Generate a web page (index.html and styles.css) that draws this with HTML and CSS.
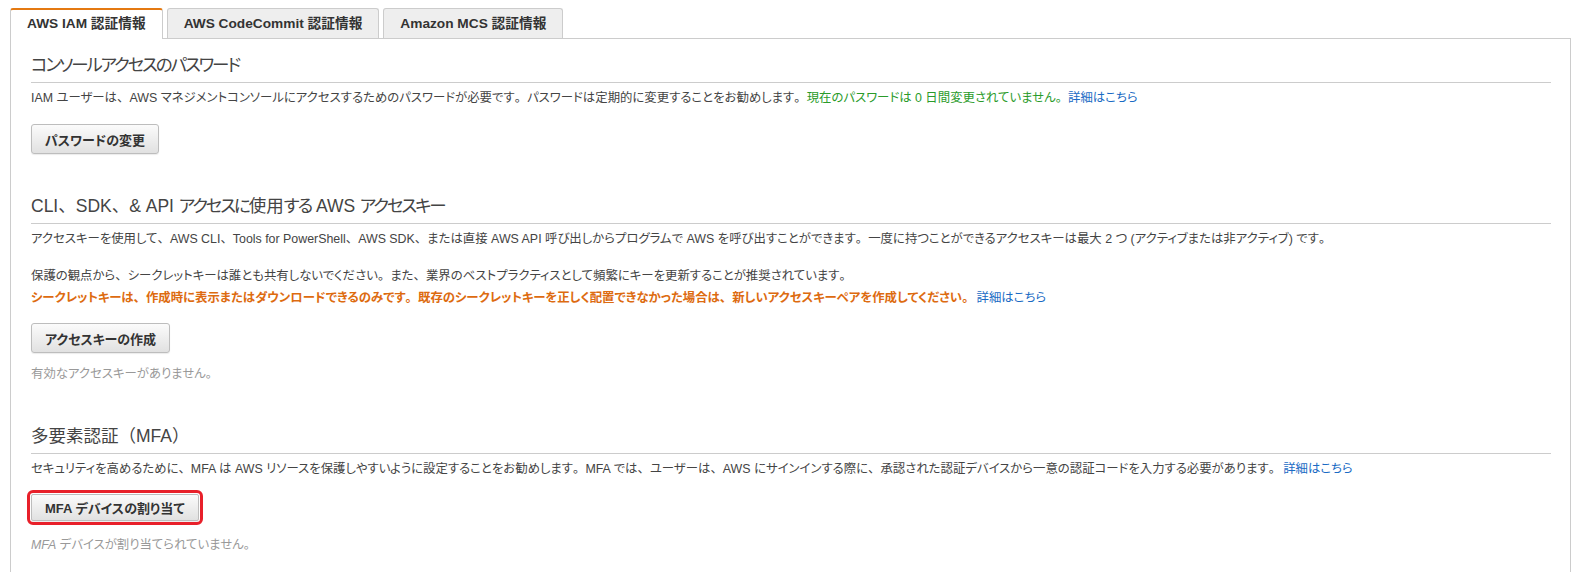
FILE: index.html
```html
<!DOCTYPE html>
<html lang="ja">
<head>
<meta charset="utf-8">
<title>AWS IAM 認証情報</title>
<link rel="stylesheet" href="styles.css">
</head>
<body>
<div class="page">
  <div class="tabs">
    <div class="tab active">AWS IAM 認証情報</div>
    <div class="tab">AWS CodeCommit 認証情報</div>
    <div class="tab">Amazon MCS 認証情報</div>
  </div>
  <div class="panel">
    <section class="section first">
      <h2 class="heading"><span class="kana">コンソールアクセスのパスワード</span></h2>
      <p class="text">IAM ユーザーは<span class="fw">、</span>AWS マネジメントコンソールにアクセスするためのパスワードが必要です<span class="fw">。</span>パスワードは定期的に変更することをお勧めします<span class="fw">。</span><span class="ok">現在のパスワードは 0 日間変更されていません<span class="fw">。</span></span><a class="link" href="#">詳細はこちら</a></p>
      <button class="btn">パスワードの変更</button>
    </section>
    <section class="section second">
      <h2 class="heading">CLI<span class="fw">、</span>SDK<span class="fw">、</span>&amp; API <span class="kana">アクセスに</span>使用<span class="kana">する</span> AWS <span class="kana">アクセスキー</span></h2>
      <p class="text">アクセスキーを使用して<span class="fw">、</span>AWS CLI<span class="fw">、</span>Tools for PowerShell<span class="fw">、</span>AWS SDK<span class="fw">、</span>または直接 AWS API 呼び出しからプログラムで AWS を呼び出すことができます<span class="fw">。</span>一度に持つことができるアクセスキーは最大 2 つ (アクティブまたは非アクティブ) です<span class="fw">。</span></p>
      <p class="text spaced">保護の観点から<span class="fw">、</span>シークレットキーは誰とも共有しないでください<span class="fw">。</span>また<span class="fw">、</span>業界のベストプラクティスとして頻繁にキーを更新することが推奨されています<span class="fw">。</span><br><span class="warn">シークレットキーは<span class="fw">、</span>作成時に表示またはダウンロードできるのみです<span class="fw">。</span>既存のシークレットキーを正しく配置できなかった場合は<span class="fw">、</span>新しいアクセスキーペアを作成してください<span class="fw">。</span></span><a class="link" href="#">詳細はこちら</a></p>
      <button class="btn">アクセスキーの作成</button>
      <p class="muted">有効なアクセスキーがありません<span class="fw">。</span></p>
    </section>
    <section class="section third">
      <h2 class="heading">多要素認証<span class="fw">（</span>MFA<span class="fw">）</span></h2>
      <p class="text">セキュリティを高めるために<span class="fw">、</span>MFA は AWS リソースを保護しやすいように設定することをお勧めします<span class="fw">。</span>MFA では<span class="fw">、</span>ユーザーは<span class="fw">、</span>AWS にサインインする際に<span class="fw">、</span>承認された認証デバイスから一意の認証コードを入力する必要があります<span class="fw">。</span><a class="link" href="#">詳細はこちら</a></p>
      <button class="btn highlight">MFA デバイスの割り当て</button>
      <p class="muted mfa-note"><i>MFA</i> デバイスが割り当てられていません<span class="fw">。</span></p>
    </section>
  </div>
</div>
</body>
</html>
```

FILE: styles.css
```css
html, body {
  margin: 0;
  padding: 0;
  background: #fff;
}

body {
  font-family: "Liberation Sans", "Noto Sans CJK JP", sans-serif;
  font-feature-settings: "palt";
  color: #444;
  font-size: 12.4px;
}

.fw {
  font-feature-settings: normal;
}

.page {
  padding: 8px 15px 0 10px;
}

.tabs {
  display: flex;
  gap: 4px;
  align-items: flex-end;
}

.tab {
  height: 29px;
  line-height: 29px;
  padding: 0 16px;
  border: 1px solid #ccc;
  border-bottom: none;
  border-radius: 3px 3px 0 0;
  background: #eee;
  font-weight: bold;
  font-size: 13.7px;
  color: #333;
  white-space: nowrap;
}

.tab.active {
  background: #fff;
  border-top: 2px solid #e47911;
  line-height: 28px;
  margin-bottom: -1px;
  position: relative;
  z-index: 1;
}

.panel {
  border: 1px solid #ccc;
  padding: 0 19px 40px 20px;
  min-height: 520px;
}

.section {
  padding-top: 40px;
}

.section.first {
  padding-top: 14px;
}

.section.third {
  padding-top: 39px;
}

.heading {
  margin: 0;
  font-size: 17.5px;
  font-weight: normal;
  line-height: 24px;
  color: #444;
  padding-bottom: 5px;
  border-bottom: 1px solid #ccc;
}

.heading .kana {
  letter-spacing: -2.1px;
}

.text {
  margin: 4px 0 0;
  line-height: 22px;
  white-space: nowrap;
}

.text.spaced {
  margin-top: 15px;
}

.ok {
  color: #2a9b2a;
}

.warn {
  color: #dd6b10;
  font-weight: bold;
}

.link {
  color: #1a6bc4;
  text-decoration: none;
  margin-left: 2px;
}

.ok + .link {
  margin-left: 0;
}

.btn {
  display: block;
  margin-top: 15px;
  height: 30px;
  padding: 0 13px;
  font-family: "Liberation Sans", "Noto Sans CJK JP", sans-serif;
  font-feature-settings: "palt";
  font-size: 13px;
  font-weight: bold;
  color: #333;
  background: linear-gradient(#fbfbfb, #e1e1e1);
  border: 1px solid #bdbdbd;
  border-radius: 3px;
  box-shadow: 0 1px 1px rgba(0, 0, 0, 0.08);
}

.second .btn {
  margin-top: 14px;
}

.btn.highlight {
  height: 27px;
  margin-top: 14px;
  padding: 0 13px;
  outline: 3px solid #e8202a;
  outline-offset: 1px;
  border-radius: 2px;
}

.muted {
  margin: 10px 0 0;
  line-height: 22px;
  color: #999;
}

.mfa-note {
  margin-top: 13px;
}

.mfa-note i {
  font-style: italic;
}
```
